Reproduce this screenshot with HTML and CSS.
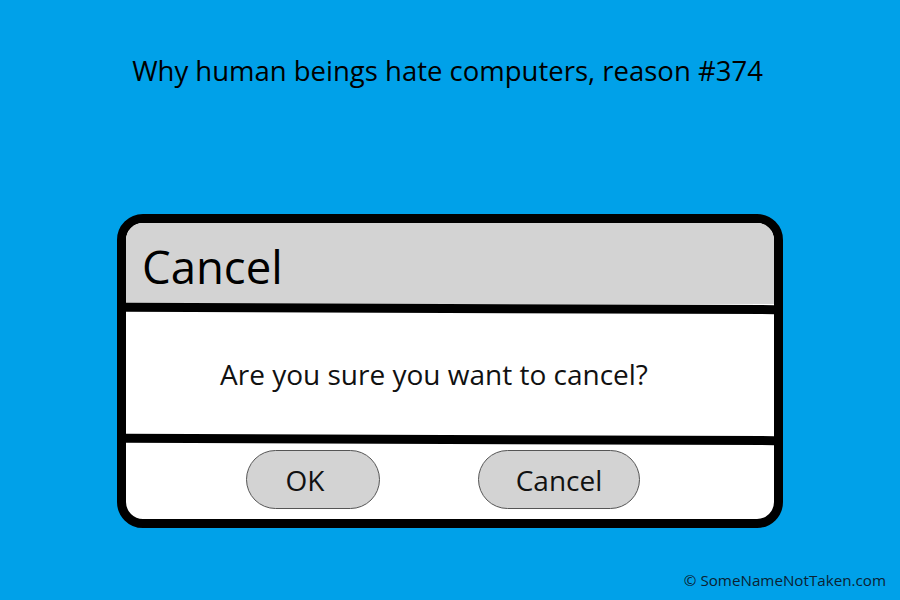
FILE: index.html
```html
<!DOCTYPE html>
<html lang="en">
<head>
  <meta charset="UTF-8" />
  <meta name="viewport" content="width=device-width, initial-scale=1.0"/>
  <title>Reason #374</title>
  <link rel="stylesheet" href="styles.css">
</head>
<body>
  <div class="page">
    <h1 class="headline">Why human beings hate computers, reason #374</h1>

    <div class="dialog">
      <div class="dialog-title">Cancel</div>
      <div class="rule"></div>
      <div class="dialog-body">
        <p>Are you sure you want to cancel?</p>
      </div>
      <div class="rule"></div>
      <div class="dialog-actions">
        <button class="btn btn-ok">OK</button>
        <button class="btn btn-cancel">Cancel</button>
      </div>
    </div>

    <div class="credit">&copy; SomeNameNotTaken.com</div>
  </div>
</body>
</html>
```

FILE: styles.css
```css
body {
  margin: 0;
  padding: 0;
  background-color: #00a1e9;
  font-family: 'Open Sans', 'Noto Sans', sans-serif;
  color: #000;
}

.page {
  height: 600px;
  display: flex;
  flex-direction: column;
}

.headline {
  margin: 52px 0 0;
  padding-right: 5px;
  font-size: 27.5px;
  font-weight: 400;
  text-align: center;
  line-height: 38px;
}

.dialog {
  width: 648px;
  margin: 124px auto 0;
  border: 9px solid #000;
  border-radius: 26px;
  background: #fff;
  overflow: hidden;
}

.dialog-title {
  height: 81px;
  background: #d3d3d3;
  padding-left: 16px;
  font-size: 45.5px;
  line-height: 86px;
  box-sizing: border-box;
}

/* thick black divider, drawn a touch crooked */
.rule {
  height: 9px;
  background: #000;
  transform: rotate(0.2deg);
}

.dialog-body {
  height: 122px;
  display: flex;
  align-items: center;
  padding-left: 94px;
  box-sizing: border-box;
}

.dialog-body p {
  margin: 0;
  font-size: 28px;
  color: #111;
}

.dialog-actions {
  height: 75px;
  display: flex;
  align-items: flex-start;
  gap: 98px;
  padding: 6px 0 0 120px;
  box-sizing: border-box;
}

.btn {
  height: 59px;
  border: 1px solid #555;
  border-radius: 30px;
  background: #d3d3d3;
  font-family: inherit;
  font-size: 28px;
  color: #111;
  padding: 0;
}

.btn-ok {
  width: 134px;
  padding-right: 16px;
}

.btn-cancel {
  width: 162px;
}

.credit {
  margin-top: auto;
  align-self: flex-end;
  padding: 0 14px 10px 0;
  font-size: 15.2px;
  color: #0b2233;
}
```
